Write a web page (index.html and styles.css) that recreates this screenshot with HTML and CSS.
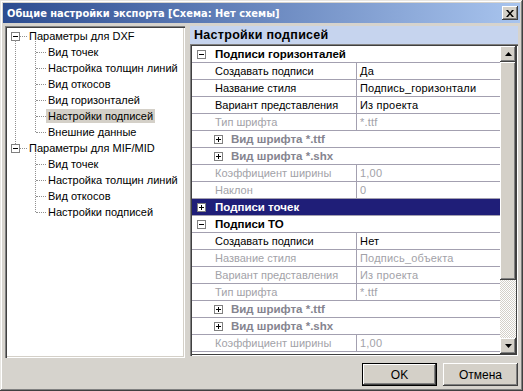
FILE: index.html
```html
<!DOCTYPE html>
<html lang="ru">
<head>
    <meta charset="UTF-8">
    <title>Общие настройки экспорта</title>
    <link rel="stylesheet" href="styles.css">
</head>
<body>
    <div class="window">
        <div class="titlebar">
            <span class="title">Общие настройки экспорта [Схема: Нет схемы]</span>
            <button class="close-btn">
                <svg width="8" height="7" viewBox="0 0 8 7"><path d="M0 0h2l2 2.5L6 0h2L5 3.5 8 7H6L4 4.5 2 7H0l3-3.5z" fill="#000"/></svg>
            </button>
        </div>

        <div class="main">
            <ul class="tree">
                <li class="node">
                    <div class="node-label">
                        <svg class="box" width="9" height="9"><rect x="0.5" y="0.5" width="8" height="8" fill="#fff" stroke="#808080"/><path d="M2 4.5h5" stroke="#000"/></svg>
                        <span class="dots"></span>
                        <span class="text">Параметры для DXF</span>
                    </div>
                    <ul class="children">
                        <li><span class="dots"></span><span class="text">Вид точек</span></li>
                        <li><span class="dots"></span><span class="text">Настройка толщин линий</span></li>
                        <li><span class="dots"></span><span class="text">Вид откосов</span></li>
                        <li><span class="dots"></span><span class="text">Вид горизонталей</span></li>
                        <li><span class="dots"></span><span class="text selected">Настройки подписей</span></li>
                        <li><span class="dots"></span><span class="text">Внешние данные</span></li>
                    </ul>
                </li>
                <li class="node last">
                    <div class="node-label">
                        <svg class="box" width="9" height="9"><rect x="0.5" y="0.5" width="8" height="8" fill="#fff" stroke="#808080"/><path d="M2 4.5h5" stroke="#000"/></svg>
                        <span class="dots"></span>
                        <span class="text">Параметры для MIF/MID</span>
                    </div>
                    <ul class="children">
                        <li><span class="dots"></span><span class="text">Вид точек</span></li>
                        <li><span class="dots"></span><span class="text">Настройка толщин линий</span></li>
                        <li><span class="dots"></span><span class="text">Вид откосов</span></li>
                        <li><span class="dots"></span><span class="text">Настройки подписей</span></li>
                    </ul>
                </li>
            </ul>

            <div class="panel">
                <div class="panel-header">Настройки подписей</div>
                <div class="grid">
                    <div class="rows">
                        <div class="row cat">
                            <svg class="box" width="9" height="9"><rect x="0.5" y="0.5" width="8" height="8" fill="#fff" stroke="#808080"/><path d="M2 4.5h5" stroke="#000"/></svg>
                            <span>Подписи горизонталей</span>
                        </div>
                        <div class="row prop"><span class="name">Создавать подписи</span><span class="value">Да</span></div>
                        <div class="row prop"><span class="name">Название стиля</span><span class="value">Подпись_горизонтали</span></div>
                        <div class="row prop"><span class="name">Вариант представления</span><span class="value">Из проекта</span></div>
                        <div class="row prop off"><span class="name">Тип шрифта</span><span class="value">*.ttf</span></div>
                        <div class="row sub">
                            <svg class="box" width="9" height="9"><rect x="0.5" y="0.5" width="8" height="8" fill="#fff" stroke="#808080"/><path d="M2 4.5h5M4.5 2v5" stroke="#000"/></svg>
                            <span>Вид шрифта *.ttf</span>
                        </div>
                        <div class="row sub">
                            <svg class="box" width="9" height="9"><rect x="0.5" y="0.5" width="8" height="8" fill="#fff" stroke="#808080"/><path d="M2 4.5h5M4.5 2v5" stroke="#000"/></svg>
                            <span>Вид шрифта *.shx</span>
                        </div>
                        <div class="row prop off"><span class="name">Коэффициент ширины</span><span class="value">1,00</span></div>
                        <div class="row prop off"><span class="name">Наклон</span><span class="value">0</span></div>
                        <div class="row cat active">
                            <svg class="box" width="9" height="9"><rect x="0.5" y="0.5" width="8" height="8" fill="#fff" stroke="#808080"/><path d="M2 4.5h5M4.5 2v5" stroke="#000"/></svg>
                            <span>Подписи точек</span>
                        </div>
                        <div class="row cat">
                            <svg class="box" width="9" height="9"><rect x="0.5" y="0.5" width="8" height="8" fill="#fff" stroke="#808080"/><path d="M2 4.5h5" stroke="#000"/></svg>
                            <span>Подписи ТО</span>
                        </div>
                        <div class="row prop"><span class="name">Создавать подписи</span><span class="value">Нет</span></div>
                        <div class="row prop off"><span class="name">Название стиля</span><span class="value">Подпись_объекта</span></div>
                        <div class="row prop off"><span class="name">Вариант представления</span><span class="value">Из проекта</span></div>
                        <div class="row prop off"><span class="name">Тип шрифта</span><span class="value">*.ttf</span></div>
                        <div class="row sub">
                            <svg class="box" width="9" height="9"><rect x="0.5" y="0.5" width="8" height="8" fill="#fff" stroke="#808080"/><path d="M2 4.5h5M4.5 2v5" stroke="#000"/></svg>
                            <span>Вид шрифта *.ttf</span>
                        </div>
                        <div class="row sub">
                            <svg class="box" width="9" height="9"><rect x="0.5" y="0.5" width="8" height="8" fill="#fff" stroke="#808080"/><path d="M2 4.5h5M4.5 2v5" stroke="#000"/></svg>
                            <span>Вид шрифта *.shx</span>
                        </div>
                        <div class="row prop off"><span class="name">Коэффициент ширины</span><span class="value">1,00</span></div>
                    </div>
                    <div class="scrollbar">
                        <div class="scroll-btn">
                            <svg width="7" height="4"><path d="M3.5 0L7 4H0z" fill="#000"/></svg>
                        </div>
                        <div class="scroll-thumb"></div>
                        <div class="scroll-track"></div>
                        <div class="scroll-btn">
                            <svg width="7" height="4"><path d="M0 0h7L3.5 4z" fill="#000"/></svg>
                        </div>
                    </div>
                </div>
            </div>
        </div>

        <div class="footer">
            <button class="btn default">OK</button>
            <button class="btn">Отмена</button>
        </div>
    </div>
</body>
</html>
```

FILE: styles.css
```css
body {
    margin: 0;
    padding: 0;
    font-family: "Liberation Sans", Arial, sans-serif;
    font-size: 11px;
    background: #d4d0c8;
}
.window {
    width: 523px;
    height: 391px;
    box-sizing: border-box;
    padding: 3px;
    display: flex;
    flex-direction: column;
    background: #d6d3cd;
    box-shadow: inset -1px -1px #404040, inset 1px 1px #e8e6e2, inset -2px -2px #808080, inset 2px 2px #fff;
}
.titlebar {
    height: 20px;
    display: flex;
    align-items: center;
    justify-content: space-between;
    padding: 0 2px 0 4px;
    background: linear-gradient(to right, #2c4c90, #a8c4ee);
    color: #fff;
}
.title {
    font-family: "DejaVu Sans", sans-serif;
    font-weight: bold;
    font-size: 9.9px;
}
.close-btn {
    width: 16px;
    height: 14px;
    padding: 0;
    border: none;
    background: #d4d0c8;
    display: flex;
    align-items: center;
    justify-content: center;
    box-shadow: inset -1px -1px #404040, inset 1px 1px #fff, inset -2px -2px #808080;
}

/* left tree */
.main {
    display: flex;
    gap: 5px;
    margin-top: 3px;
    padding: 0 2px;
    height: 332px;
}
.tree {
    width: 180px;
    flex-shrink: 0;
    box-sizing: border-box;
    margin: 0;
    padding: 2px;
    list-style: none;
    background: #fff;
    overflow: hidden;
    box-shadow: inset 1px 1px #808080, inset 2px 2px #404040, inset -1px -1px #fff, inset -2px -2px #d4d0c8;
}
.tree ul {
    list-style: none;
    margin: 0;
    padding: 0;
}
.node {
    position: relative;
}
.node:not(.last)::after {
    content: "";
    position: absolute;
    left: 8px;
    top: 12px;
    bottom: -4px;
    border-left: 1px dotted #909090;
}
.node-label {
    display: flex;
    align-items: center;
    height: 16px;
    padding-left: 4px;
}
.node-label .dots {
    width: 7px;
    flex-shrink: 0;
    border-top: 1px dotted #909090;
    margin-right: 2px;
}
.children {
    position: relative;
}
.children::before {
    content: "";
    position: absolute;
    left: 28px;
    top: -3px;
    bottom: 8px;
    border-left: 1px dotted #909090;
}
.children li {
    display: flex;
    align-items: center;
    height: 16px;
    padding-left: 29px;
}
.children .dots {
    width: 10px;
    flex-shrink: 0;
    border-top: 1px dotted #909090;
}
.children .text {
    padding: 1px 2px;
}
.tree .text {
    color: #000;
    font-size: 11px;
    white-space: nowrap;
}
.children .text.selected {
    background: #d4d0c8;
}

/* right panel */
.panel {
    flex: 1;
    display: flex;
    flex-direction: column;
}
.panel-header {
    height: 18px;
    display: flex;
    align-items: center;
    padding-left: 4px;
    background: #c6d4ee;
    font-weight: bold;
    font-size: 12.5px;
    letter-spacing: 0.3px;
}
.grid {
    flex: 1;
    display: flex;
    padding: 2px;
    margin-bottom: 2px;
    box-shadow: inset 1px 1px #808080, inset 2px 2px #404040, inset -1px -1px #fff, inset -2px -2px #404040;
}
.rows {
    flex: 1;
    background: #fff;
    overflow: hidden;
}
.row {
    height: 17px;
    box-sizing: border-box;
    display: flex;
    align-items: center;
    border-bottom: 1px solid #a3a0b0;
    white-space: nowrap;
}
.row.cat {
    padding-left: 5px;
    gap: 9px;
    font-weight: bold;
    font-size: 11.5px;
    color: #000;
}
.row.cat.active {
    background: #1f1e78;
    color: #fff;
}
.row.sub {
    padding-left: 22px;
    gap: 8px;
    font-weight: bold;
    font-size: 11.5px;
    color: #85848f;
}
.row.prop .name {
    width: 141px;
    height: 100%;
    display: flex;
    align-items: center;
    padding-left: 23px;
    border-right: 1px solid #a3a0b0;
}
.row.prop .value {
    padding-left: 3px;
    letter-spacing: 0.2px;
}
.row.off {
    color: #a2a2a8;
}
.scrollbar {
    width: 16px;
    display: flex;
    flex-direction: column;
}
.scroll-btn {
    height: 16px;
    display: flex;
    align-items: center;
    justify-content: center;
    background: #d4d0c8;
    box-shadow: inset -1px -1px #404040, inset 1px 1px #fff, inset -2px -2px #808080;
}
.scroll-thumb {
    height: 218px;
    background: #d4d0c8;
    box-shadow: inset -1px -1px #404040, inset 1px 1px #fff, inset -2px -2px #808080;
}
.scroll-track {
    flex: 1;
    background: repeating-conic-gradient(#fff 0 25%, #d4d0c8 0 50%) 0 0 / 2px 2px;
}

/* buttons */
.footer {
    display: flex;
    justify-content: flex-end;
    gap: 6px;
    margin-top: 5px;
    padding: 0 2px;
}
.btn {
    width: 75px;
    height: 23px;
    border: none;
    padding: 0;
    background: #d4d0c8;
    font-family: "Liberation Sans", Arial, sans-serif;
    font-size: 12px;
    color: #000;
    box-shadow: inset -1px -1px #404040, inset 1px 1px #fff, inset -2px -2px #808080;
}
.btn.default {
    box-shadow: inset 0 0 0 1px #000, inset -2px -2px #404040, inset 2px 2px #fff, inset -3px -3px #808080;
}
```
